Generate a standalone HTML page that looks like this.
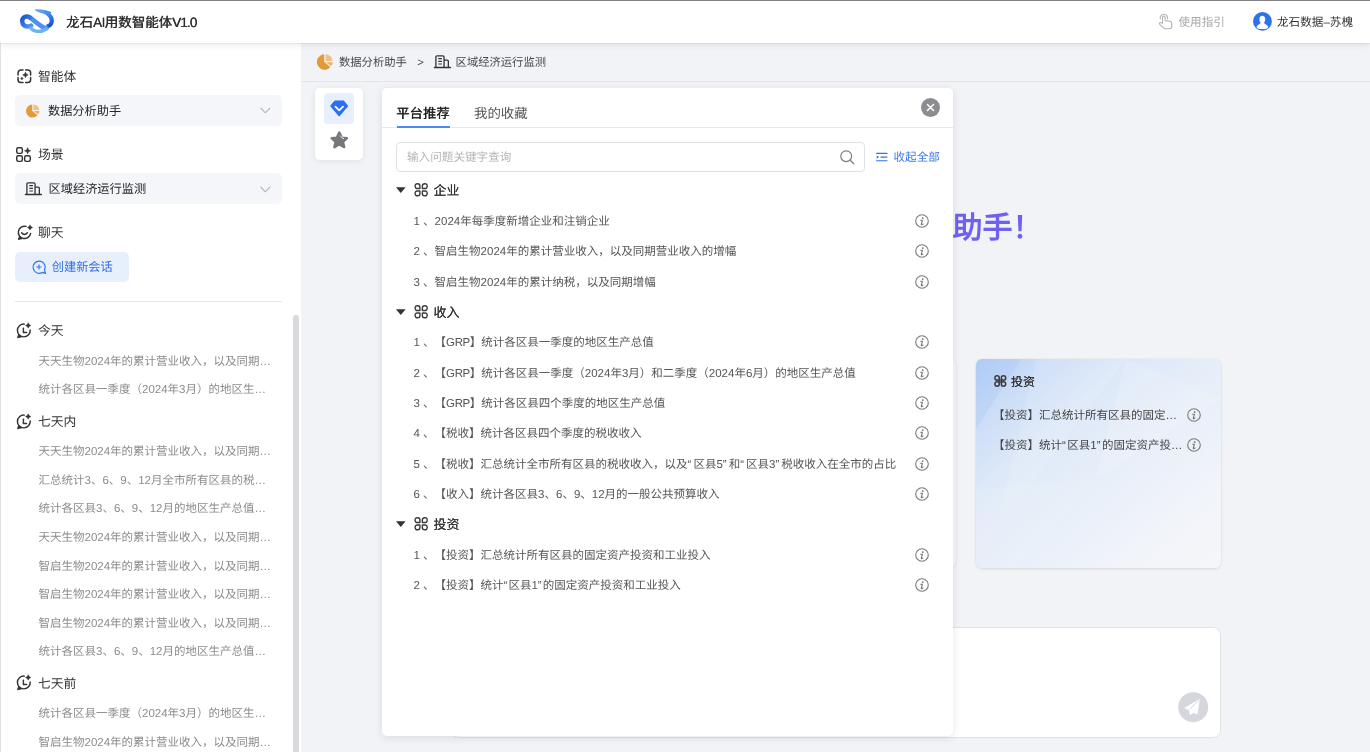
<!DOCTYPE html>
<html lang="zh-CN"><head><meta charset="utf-8">
<style>
html,body{margin:0;padding:0}
body{width:1370px;height:752px;overflow:hidden;position:relative;background:#f2f3f7;font-family:"Liberation Sans",sans-serif;color:#333;text-rendering:geometricPrecision;text-spacing-trim:space-all}
.a{position:absolute}
.t{position:absolute;white-space:nowrap;line-height:20px;height:20px;margin-top:1px}
svg{position:absolute;overflow:visible}
#root{position:absolute;left:0;top:0;width:1370px;height:752px;overflow:hidden;will-change:transform}
</style></head><body><div id="root">

<!-- ===== MAIN BG CONTENT (behind panel) ===== -->
<div class="a" id="crumb" style="left:301px;top:43px;width:1069px;height:38px;background:#f2f3f7;border-bottom:1px solid #e3e4e9"></div>


<!-- breadcrumb -->
<div class="a" style="left:301px;top:0;width:1069px;height:752px;z-index:1">
 <svg style="left:15.8px;top:54px" width="16" height="16" viewBox="0 0 16 16">
  <path d="M7.2,0.3 A7.7,7.7 0 1 0 13.4,13 L7.2,8.1 Z" fill="#e39a3b"/>
  <path d="M8.5,0.3 A7.5,7.5 0 0 1 15.7,7 L8.5,7 Z" fill="#efc283"/>
  <path d="M8.5,8.2 L15.7,8.2 A7.5,7.5 0 0 1 14.4,12.1 Z" fill="#ebb163"/>
 </svg>
 <div class="t" style="left:38px;top:51.5px;font-size:11.3px;color:#474747">数据分析助手</div>
 <div class="t" style="left:116.3px;top:51.5px;font-size:11.3px;color:#474747">&gt;</div>
 <svg style="left:133px;top:55px" width="17" height="14" viewBox="0 0 17 14">
  <path d="M0.4,12.5 H16.4" stroke="#333" stroke-width="1.3" stroke-linecap="round"/>
  <path d="M1.9,12.4 V2 Q1.9,0.8 3.1,0.8 H8.8 Q10.05,0.8 10.05,2 V12.4 M10.05,5.15 H13.2 Q14.35,5.15 14.35,6.3 V12.4" fill="none" stroke="#333" stroke-width="1.3"/>
  <path d="M4.3,3.7 H7.9 M4.3,6.35 H7.9 M4.3,9 H7.9" stroke="#333" stroke-width="1.2"/>
 </svg>
 <div class="t" style="left:154.6px;top:51.5px;font-size:11.3px;color:#474747">区域经济运行监测</div>
</div>

<!-- welcome (behind panel) -->
<div class="t" style="left:682.5px;top:207.5px;height:40px;line-height:40px;font-size:30px;font-weight:700;color:#6f60f2;z-index:1">您好，我是数据分析助手！</div>

<!-- cards -->
<div class="a" style="left:446px;top:359px;width:245px;height:208px;border-radius:6px;background:#f7f8fa;box-shadow:0 1px 3px rgba(0,0,0,.1);z-index:1"></div>
<div class="a" style="left:711px;top:359px;width:245px;height:208px;border-radius:6px;background:#f7f8fa;box-shadow:0 1px 3px rgba(0,0,0,.1);z-index:1"></div>
<div class="a" id="card3" style="left:975.5px;top:359px;width:245.5px;height:208.5px;border-radius:6px;overflow:hidden;background:linear-gradient(140deg,#b3cdf5 0%,#cadcf7 14%,#dde8f8 32%,#e8eff9 55%,#f1f4f9 78%,#f5f6f9 100%);box-shadow:0 0 0 0.5px rgba(0,0,0,.04),0 1px 3px rgba(0,0,0,.1);z-index:1">
 <svg style="left:0;top:0" width="245" height="208" viewBox="0 0 245 208">
  <path d="M0,0 L45,0 L0,70 Z" fill="#a9c8f5" opacity=".3"/>
  <path d="M60,0 L150,0 L20,170 Z" fill="#ffffff" opacity=".12"/>
  <path d="M150,0 L245,40 L120,120 Z" fill="#ffffff" opacity=".14"/>
  <path d="M0,130 L120,120 L40,208 L0,208 Z" fill="#ffffff" opacity=".1"/>
 </svg>
 <svg style="left:18px;top:16px" width="13" height="12" viewBox="0 0 13 12">
  <circle cx="3.1" cy="3" r="2.2" fill="none" stroke="#3c3c3c" stroke-width="1.5"/>
  <circle cx="9.5" cy="3" r="2.2" fill="none" stroke="#3c3c3c" stroke-width="1.5"/>
  <circle cx="3.1" cy="9" r="2.2" fill="none" stroke="#3c3c3c" stroke-width="1.5"/>
  <circle cx="9.5" cy="9" r="2.2" fill="none" stroke="#3c3c3c" stroke-width="1.5"/>
  <rect x="5.2" y="4.9" width="2.2" height="2.2" fill="none" stroke="#3c3c3c" stroke-width="1.4"/>
 </svg>
 <div class="t" style="left:35.5px;top:11.5px;font-size:12px;color:#333;text-shadow:0.1px 0 0 #333">投资</div>
 <div class="t" style="left:17.5px;top:45.5px;font-size:11.5px;color:#444">【投资】汇总统计所有区县的固定…</div>
 <div class="t" style="left:17.5px;top:76px;font-size:11.5px;color:#444">【投资】统计<span style="letter-spacing:1.5px">“</span>区县1<span style="letter-spacing:1.5px">”</span>的固定资产投…</div>
 <svg style="left:211.5px;top:48.7px" width="14" height="14" viewBox="0 0 14 14"><circle cx="7" cy="7" r="6.3" fill="none" stroke="#7a7a7a" stroke-width="1.1"/><circle cx="7.7" cy="4.1" r="0.9" fill="#707070"/><path d="M5.7,6.3 H7.4 L6.3,10.1 Q6.1,11 7,10.6 L8,10" fill="none" stroke="#707070" stroke-width="1.05" stroke-linecap="round" stroke-linejoin="round"/></svg>
 <svg style="left:211.5px;top:79px" width="14" height="14" viewBox="0 0 14 14"><circle cx="7" cy="7" r="6.3" fill="none" stroke="#7a7a7a" stroke-width="1.1"/><circle cx="7.7" cy="4.1" r="0.9" fill="#707070"/><path d="M5.7,6.3 H7.4 L6.3,10.1 Q6.1,11 7,10.6 L8,10" fill="none" stroke="#707070" stroke-width="1.05" stroke-linecap="round" stroke-linejoin="round"/></svg>
</div>

<!-- input box -->
<div class="a" style="left:451px;top:626.5px;width:768px;height:109px;border:1px solid #e1e2e6;border-radius:8px;background:#fff;z-index:1">
 <svg style="left:726px;top:64.5px" width="31" height="31" viewBox="0 0 31 31">
  <circle cx="15.2" cy="15.2" r="15" fill="#d5d7dc"/>
  <path d="M21.3,7.6 L6.6,16 L11.2,17.7 L12.2,22.7 L15.3,20.5 L19.3,22.1 Z" fill="#fff" stroke="#fff" stroke-width="0.6" stroke-linejoin="round"/>
  <path d="M20.6,8.4 L11.6,17.4" stroke="#d5d7dc" stroke-width="0.9"/>
 </svg>
</div>

<!-- left tab card -->
<div class="a" style="left:315px;top:88.3px;width:48px;height:72px;background:#fff;border-radius:5px;box-shadow:0 1px 6px rgba(0,0,0,.08);z-index:3">
 <div class="a" style="left:9px;top:5px;width:30px;height:31px;background:#e8effc;border-radius:4px"></div>
 <svg style="left:14.5px;top:11.5px" width="19" height="17" viewBox="0 0 19 17">
  <path d="M5,1.2 H13.4 L17.3,5.9 L9.2,15.4 L1.1,5.9 Z" fill="#2c6ff0" stroke="#2c6ff0" stroke-width="1.6" stroke-linejoin="round"/>
  <path d="M5.4,6.6 L9.2,10.3 L13,6.6" fill="none" stroke="#fff" stroke-width="1.7" stroke-linecap="round" stroke-linejoin="round"/>
 </svg>
 <svg style="left:14.5px;top:42.5px" width="19" height="18" viewBox="0 0 19 18">
  <path transform="translate(9.3 9.5) scale(1.1) translate(-9.5 -9.5)" d="M9.5,2.3 L11.6,6.9 L16.4,7.38 L12.8,10.7 L13.9,15.5 L9.5,12.9 L5.1,15.5 L6.2,10.7 L2.6,7.38 L7.4,6.9 Z" fill="#77787c" stroke="#77787c" stroke-width="2.3" stroke-linejoin="round"/>
  <path d="M10.4,5 Q11.3,7 13.6,7.7" fill="none" stroke="#fff" stroke-width="0.9" stroke-linecap="round"/>
 </svg>
</div>


<!-- ===== PANEL ===== -->
<div class="a" id="panel" style="left:382px;top:88px;width:571px;height:648px;background:#fff;border-radius:5px;box-shadow:0 2px 8px rgba(0,0,0,.10);z-index:3">
 <div class="t" style="left:14px;top:14.5px;font-size:13.4px;color:#222;text-shadow:0.45px 0 0 #222">平台推荐</div>
 <div class="t" style="left:92px;top:14.5px;font-size:13.4px;color:#555">我的收藏</div>
 <div class="a" style="left:0;top:39px;width:571px;height:1px;background:#e7e8ec"></div>
 <div class="a" style="left:14.5px;top:38px;width:53px;height:2px;background:#4a8af4"></div>
 <svg style="left:539px;top:10px" width="19" height="19" viewBox="0 0 19 19"><circle cx="9.5" cy="9.5" r="9.5" fill="#8c8d91"/><path d="M6.5,6.5 L12.5,12.5 M12.5,6.5 L6.5,12.5" stroke="#fff" stroke-width="1.55" stroke-linecap="round"/></svg>
 <div class="a" style="left:14px;top:54px;width:467px;height:28px;border:1px solid #dfe1e6;border-radius:4px"></div>
 <div class="t" style="left:25px;top:59px;font-size:11.6px;color:#b5b5b5">输入问题关键字查询</div>
 <svg style="left:457.8px;top:61.8px" width="15" height="15" viewBox="0 0 15 15"><circle cx="6.2" cy="6.2" r="5.4" fill="none" stroke="#7d7d7d" stroke-width="1.2"/><path d="M10.2,10.2 L13.8,13.8" stroke="#7d7d7d" stroke-width="1.3" stroke-linecap="round"/></svg>
 <svg style="left:494px;top:64px" width="12" height="11" viewBox="0 0 12 11"><path d="M0.6,1.4 H11 M4.9,5.1 H11 M0.6,8.7 H11" stroke="#2f72ea" stroke-width="1.15" stroke-linecap="round"/><path d="M0.7,3.5 L3.1,5.1 L0.7,6.7 Z" fill="#2f72ea"/></svg>
 <div class="t" style="left:511.5px;top:59px;font-size:11.6px;color:#3a78ec">收起全部</div>
 <svg style="left:14px;top:99.4px" width="10" height="7" viewBox="0 0 10 7"><path d="M0,0.2 H9.6 L4.8,6 Z" fill="#333"/></svg>
 <svg style="left:31.6px;top:95.2px" width="15" height="15" viewBox="0 0 15 15"><path d="M3.30,0.70 H3.75 A2.20,2.20 0 0 1 5.95,2.90 V5.15 A0.40,0.40 0 0 1 5.55,5.55 H3.30 A2.20,2.20 0 0 1 1.10,3.35 V2.90 A2.20,2.20 0 0 1 3.30,0.70 Z M10.55,0.70 H11.00 A2.20,2.20 0 0 1 13.20,2.90 V3.35 A2.20,2.20 0 0 1 11.00,5.55 H8.75 A0.40,0.40 0 0 1 8.35,5.15 V2.90 A2.20,2.20 0 0 1 10.55,0.70 Z M3.30,7.95 H5.55 A0.40,0.40 0 0 1 5.95,8.35 V10.60 A2.20,2.20 0 0 1 3.75,12.80 H3.30 A2.20,2.20 0 0 1 1.10,10.60 V10.15 A2.20,2.20 0 0 1 3.30,7.95 Z M8.75,7.95 H11.00 A2.20,2.20 0 0 1 13.20,10.15 V10.60 A2.20,2.20 0 0 1 11.00,12.80 H10.55 A2.20,2.20 0 0 1 8.35,10.60 V8.35 A0.40,0.40 0 0 1 8.75,7.95 Z" fill="none" stroke="#3a3a3a" stroke-width="1.4"/></svg>
 <div class="t" style="left:51.5px;top:92.4px;font-size:13px;color:#333;text-shadow:0.12px 0 0 #333">企业</div>
 <div class="t" style="left:31.5px;top:122.8px;font-size:11.5px;color:#555">1 、2024年每季度新增企业和注销企业</div>
 <svg style="left:532.8px;top:125.8px" width="14" height="14" viewBox="0 0 14 14"><circle cx="7" cy="7" r="6.3" fill="none" stroke="#7a7a7a" stroke-width="1.1"/><circle cx="7.7" cy="4.1" r="0.9" fill="#707070"/><path d="M5.7,6.3 H7.4 L6.3,10.1 Q6.1,11 7,10.6 L8,10" fill="none" stroke="#707070" stroke-width="1.05" stroke-linecap="round" stroke-linejoin="round"/></svg>
 <div class="t" style="left:31.5px;top:153.1px;font-size:11.5px;color:#555">2 、智启生物2024年的累计营业收入，以及同期营业收入的增幅</div>
 <svg style="left:532.8px;top:156.1px" width="14" height="14" viewBox="0 0 14 14"><circle cx="7" cy="7" r="6.3" fill="none" stroke="#7a7a7a" stroke-width="1.1"/><circle cx="7.7" cy="4.1" r="0.9" fill="#707070"/><path d="M5.7,6.3 H7.4 L6.3,10.1 Q6.1,11 7,10.6 L8,10" fill="none" stroke="#707070" stroke-width="1.05" stroke-linecap="round" stroke-linejoin="round"/></svg>
 <div class="t" style="left:31.5px;top:183.5px;font-size:11.5px;color:#555">3 、智启生物2024年的累计纳税，以及同期增幅</div>
 <svg style="left:532.8px;top:186.5px" width="14" height="14" viewBox="0 0 14 14"><circle cx="7" cy="7" r="6.3" fill="none" stroke="#7a7a7a" stroke-width="1.1"/><circle cx="7.7" cy="4.1" r="0.9" fill="#707070"/><path d="M5.7,6.3 H7.4 L6.3,10.1 Q6.1,11 7,10.6 L8,10" fill="none" stroke="#707070" stroke-width="1.05" stroke-linecap="round" stroke-linejoin="round"/></svg>
 <svg style="left:14px;top:220.8px" width="10" height="7" viewBox="0 0 10 7"><path d="M0,0.2 H9.6 L4.8,6 Z" fill="#333"/></svg>
 <svg style="left:31.6px;top:216.6px" width="15" height="15" viewBox="0 0 15 15"><path d="M3.30,0.70 H3.75 A2.20,2.20 0 0 1 5.95,2.90 V5.15 A0.40,0.40 0 0 1 5.55,5.55 H3.30 A2.20,2.20 0 0 1 1.10,3.35 V2.90 A2.20,2.20 0 0 1 3.30,0.70 Z M10.55,0.70 H11.00 A2.20,2.20 0 0 1 13.20,2.90 V3.35 A2.20,2.20 0 0 1 11.00,5.55 H8.75 A0.40,0.40 0 0 1 8.35,5.15 V2.90 A2.20,2.20 0 0 1 10.55,0.70 Z M3.30,7.95 H5.55 A0.40,0.40 0 0 1 5.95,8.35 V10.60 A2.20,2.20 0 0 1 3.75,12.80 H3.30 A2.20,2.20 0 0 1 1.10,10.60 V10.15 A2.20,2.20 0 0 1 3.30,7.95 Z M8.75,7.95 H11.00 A2.20,2.20 0 0 1 13.20,10.15 V10.60 A2.20,2.20 0 0 1 11.00,12.80 H10.55 A2.20,2.20 0 0 1 8.35,10.60 V8.35 A0.40,0.40 0 0 1 8.75,7.95 Z" fill="none" stroke="#3a3a3a" stroke-width="1.4"/></svg>
 <div class="t" style="left:51.5px;top:213.8px;font-size:13px;color:#333;text-shadow:0.12px 0 0 #333">收入</div>
 <div class="t" style="left:31.5px;top:244.1px;font-size:11.5px;color:#555">1 、【<span style="letter-spacing:-0.4px">GRP</span>】统计各区县一季度的地区生产总值</div>
 <svg style="left:532.8px;top:247.1px" width="14" height="14" viewBox="0 0 14 14"><circle cx="7" cy="7" r="6.3" fill="none" stroke="#7a7a7a" stroke-width="1.1"/><circle cx="7.7" cy="4.1" r="0.9" fill="#707070"/><path d="M5.7,6.3 H7.4 L6.3,10.1 Q6.1,11 7,10.6 L8,10" fill="none" stroke="#707070" stroke-width="1.05" stroke-linecap="round" stroke-linejoin="round"/></svg>
 <div class="t" style="left:31.5px;top:274.5px;font-size:11.5px;color:#555">2 、【<span style="letter-spacing:-0.4px">GRP</span>】统计各区县一季度（2024年3月）和二季度（2024年6月）的地区生产总值</div>
 <svg style="left:532.8px;top:277.5px" width="14" height="14" viewBox="0 0 14 14"><circle cx="7" cy="7" r="6.3" fill="none" stroke="#7a7a7a" stroke-width="1.1"/><circle cx="7.7" cy="4.1" r="0.9" fill="#707070"/><path d="M5.7,6.3 H7.4 L6.3,10.1 Q6.1,11 7,10.6 L8,10" fill="none" stroke="#707070" stroke-width="1.05" stroke-linecap="round" stroke-linejoin="round"/></svg>
 <div class="t" style="left:31.5px;top:304.9px;font-size:11.5px;color:#555">3 、【<span style="letter-spacing:-0.4px">GRP</span>】统计各区县四个季度的地区生产总值</div>
 <svg style="left:532.8px;top:307.9px" width="14" height="14" viewBox="0 0 14 14"><circle cx="7" cy="7" r="6.3" fill="none" stroke="#7a7a7a" stroke-width="1.1"/><circle cx="7.7" cy="4.1" r="0.9" fill="#707070"/><path d="M5.7,6.3 H7.4 L6.3,10.1 Q6.1,11 7,10.6 L8,10" fill="none" stroke="#707070" stroke-width="1.05" stroke-linecap="round" stroke-linejoin="round"/></svg>
 <div class="t" style="left:31.5px;top:335.2px;font-size:11.5px;color:#555">4 、【税收】统计各区县四个季度的税收收入</div>
 <svg style="left:532.8px;top:338.2px" width="14" height="14" viewBox="0 0 14 14"><circle cx="7" cy="7" r="6.3" fill="none" stroke="#7a7a7a" stroke-width="1.1"/><circle cx="7.7" cy="4.1" r="0.9" fill="#707070"/><path d="M5.7,6.3 H7.4 L6.3,10.1 Q6.1,11 7,10.6 L8,10" fill="none" stroke="#707070" stroke-width="1.05" stroke-linecap="round" stroke-linejoin="round"/></svg>
 <div class="t" style="left:31.5px;top:365.6px;font-size:11.5px;color:#555">5 、【税收】汇总统计全市所有区县的税收收入，以及<span style="letter-spacing:2px">“</span>区县5<span style="letter-spacing:2px">”</span>和<span style="letter-spacing:2px">“</span>区县3<span style="letter-spacing:2px">”</span>税收收入在全市的占比</div>
 <svg style="left:532.8px;top:368.6px" width="14" height="14" viewBox="0 0 14 14"><circle cx="7" cy="7" r="6.3" fill="none" stroke="#7a7a7a" stroke-width="1.1"/><circle cx="7.7" cy="4.1" r="0.9" fill="#707070"/><path d="M5.7,6.3 H7.4 L6.3,10.1 Q6.1,11 7,10.6 L8,10" fill="none" stroke="#707070" stroke-width="1.05" stroke-linecap="round" stroke-linejoin="round"/></svg>
 <div class="t" style="left:31.5px;top:395.9px;font-size:11.5px;color:#555">6 、【收入】统计各区县3、6、9、12月的一般公共预算收入</div>
 <svg style="left:532.8px;top:398.9px" width="14" height="14" viewBox="0 0 14 14"><circle cx="7" cy="7" r="6.3" fill="none" stroke="#7a7a7a" stroke-width="1.1"/><circle cx="7.7" cy="4.1" r="0.9" fill="#707070"/><path d="M5.7,6.3 H7.4 L6.3,10.1 Q6.1,11 7,10.6 L8,10" fill="none" stroke="#707070" stroke-width="1.05" stroke-linecap="round" stroke-linejoin="round"/></svg>
 <svg style="left:14px;top:433.2px" width="10" height="7" viewBox="0 0 10 7"><path d="M0,0.2 H9.6 L4.8,6 Z" fill="#333"/></svg>
 <svg style="left:31.6px;top:429.1px" width="15" height="15" viewBox="0 0 15 15"><path d="M3.30,0.70 H3.75 A2.20,2.20 0 0 1 5.95,2.90 V5.15 A0.40,0.40 0 0 1 5.55,5.55 H3.30 A2.20,2.20 0 0 1 1.10,3.35 V2.90 A2.20,2.20 0 0 1 3.30,0.70 Z M10.55,0.70 H11.00 A2.20,2.20 0 0 1 13.20,2.90 V3.35 A2.20,2.20 0 0 1 11.00,5.55 H8.75 A0.40,0.40 0 0 1 8.35,5.15 V2.90 A2.20,2.20 0 0 1 10.55,0.70 Z M3.30,7.95 H5.55 A0.40,0.40 0 0 1 5.95,8.35 V10.60 A2.20,2.20 0 0 1 3.75,12.80 H3.30 A2.20,2.20 0 0 1 1.10,10.60 V10.15 A2.20,2.20 0 0 1 3.30,7.95 Z M8.75,7.95 H11.00 A2.20,2.20 0 0 1 13.20,10.15 V10.60 A2.20,2.20 0 0 1 11.00,12.80 H10.55 A2.20,2.20 0 0 1 8.35,10.60 V8.35 A0.40,0.40 0 0 1 8.75,7.95 Z" fill="none" stroke="#3a3a3a" stroke-width="1.4"/></svg>
 <div class="t" style="left:51.5px;top:426.2px;font-size:13px;color:#333;text-shadow:0.12px 0 0 #333">投资</div>
 <div class="t" style="left:31.5px;top:456.6px;font-size:11.5px;color:#555">1 、【投资】汇总统计所有区县的固定资产投资和工业投入</div>
 <svg style="left:532.8px;top:459.6px" width="14" height="14" viewBox="0 0 14 14"><circle cx="7" cy="7" r="6.3" fill="none" stroke="#7a7a7a" stroke-width="1.1"/><circle cx="7.7" cy="4.1" r="0.9" fill="#707070"/><path d="M5.7,6.3 H7.4 L6.3,10.1 Q6.1,11 7,10.6 L8,10" fill="none" stroke="#707070" stroke-width="1.05" stroke-linecap="round" stroke-linejoin="round"/></svg>
 <div class="t" style="left:31.5px;top:487.0px;font-size:11.5px;color:#555">2 、【投资】统计<span style="letter-spacing:1px">“</span>区县1<span style="letter-spacing:1px">”</span>的固定资产投资和工业投入</div>
 <svg style="left:532.8px;top:490.0px" width="14" height="14" viewBox="0 0 14 14"><circle cx="7" cy="7" r="6.3" fill="none" stroke="#7a7a7a" stroke-width="1.1"/><circle cx="7.7" cy="4.1" r="0.9" fill="#707070"/><path d="M5.7,6.3 H7.4 L6.3,10.1 Q6.1,11 7,10.6 L8,10" fill="none" stroke="#707070" stroke-width="1.05" stroke-linecap="round" stroke-linejoin="round"/></svg>
</div>

<!-- ===== SIDEBAR ===== -->
<div class="a" id="side" style="left:0;top:43px;width:301px;height:709px;background:#fff"></div>
<div class="a" style="left:0;top:43px;width:1px;height:709px;background:#e1e1e1"></div>


<!-- sidebar content -->
<div class="a" id="sidec" style="left:0;top:0;width:301px;height:752px;z-index:2">
 <svg style="left:16.5px;top:69px" width="15" height="15" viewBox="0 0 15 15">
  <path d="M1.05,6 V3.85 a2.8,2.8 0 0 1 2.8,-2.8 H6 M8.6,1.05 H10.8 a2.8,2.8 0 0 1 2.8,2.8 V6 M13.6,8.6 V10.8 a2.8,2.8 0 0 1 -2.8,2.8 H8.6 M6,13.6 H3.85 a2.8,2.8 0 0 1 -2.8,-2.8 V8.6" fill="none" stroke="#333" stroke-width="1.5" stroke-linecap="round"/>
  <path d="M8.44,3.20 L9.29,5.05 L11.14,5.90 L9.29,6.75 L8.44,8.60 L7.59,6.75 L5.74,5.90 L7.59,5.05 Z" fill="#333" stroke="#333" stroke-width="0.6" stroke-linejoin="round"/>
  <path d="M4.90,8.15 L5.40,9.00 L6.25,9.50 L5.40,10.00 L4.90,10.85 L4.40,10.00 L3.55,9.50 L4.40,9.00 Z" fill="#333" stroke="#333" stroke-width="0.5" stroke-linejoin="round"/>
 </svg>
 <div class="t" style="left:38px;top:66px;font-size:12.8px;color:#333">智能体</div>
 <div class="a" style="left:15px;top:95px;width:267px;height:30.5px;background:#f5f6fa;border-radius:5px"></div>
 <svg style="left:26.3px;top:104px" width="14" height="14" viewBox="0 0 14 14">
  <path d="M6.3,0.6 A6.5,6.5 0 1 0 11.6,11.2 L6.3,7 Z" fill="#e39a3b"/>
  <path d="M7.4,0.6 A6.4,6.4 0 0 1 13.4,6 L7.4,6 Z" fill="#efc283"/>
  <path d="M7.4,7 L13.4,7 A6.4,6.4 0 0 1 12.3,10.3 Z" fill="#ebb163"/>
 </svg>
 <div class="t" style="left:48px;top:100px;font-size:12.2px;color:#262626">数据分析助手</div>
 <svg style="left:260.2px;top:107.3px" width="11" height="7" viewBox="0 0 11 7"><path d="M0.5,0.8 L5.3,5.8 L10.2,0.8" fill="none" stroke="#b0b0b0" stroke-width="1.1"/></svg>

 <svg style="left:16.2px;top:146.7px" width="16" height="16" viewBox="0 0 16 16">
  <rect x="0.75" y="0.75" width="5.6" height="5.6" rx="1.5" fill="none" stroke="#333" stroke-width="1.45"/>
  <rect x="0.75" y="8.75" width="5.6" height="5.6" rx="1.5" fill="none" stroke="#333" stroke-width="1.45"/>
  <rect x="8.65" y="8.75" width="5.6" height="5.6" rx="1.5" fill="none" stroke="#333" stroke-width="1.45"/>
  <path d="M11.6,0.6 L12.5,2.9 L14.8,3.8 L12.5,4.7 L11.6,7 L10.7,4.7 L8.4,3.8 L10.7,2.9 Z" fill="#333" stroke="#333" stroke-width="0.5" stroke-linejoin="round"/>
 </svg>
 <div class="t" style="left:38px;top:144px;font-size:12.8px;color:#333">场景</div>
 <div class="a" style="left:15px;top:173px;width:267px;height:30.5px;background:#f5f6fa;border-radius:5px"></div>
 <svg style="left:25px;top:182px" width="17" height="14" viewBox="0 0 17 14">
  <path d="M0.4,12.5 H16.4" stroke="#333" stroke-width="1.3" stroke-linecap="round"/>
  <path d="M1.9,12.4 V2 Q1.9,0.8 3.1,0.8 H8.8 Q10.05,0.8 10.05,2 V12.4 M10.05,5.15 H13.2 Q14.35,5.15 14.35,6.3 V12.4" fill="none" stroke="#333" stroke-width="1.3"/>
  <path d="M4.3,3.7 H7.9 M4.3,6.35 H7.9 M4.3,9 H7.9" stroke="#333" stroke-width="1.2"/>
 </svg>
 <div class="t" style="left:48.6px;top:178px;font-size:12.2px;color:#262626">区域经济运行监测</div>
 <svg style="left:260.2px;top:185.6px" width="11" height="7" viewBox="0 0 11 7"><path d="M0.5,0.8 L5.3,5.8 L10.2,0.8" fill="none" stroke="#b0b0b0" stroke-width="1.1"/></svg>

 <svg style="left:16.5px;top:224.6px" width="16" height="16" viewBox="0 0 16 16">
  <path d="M9,1.35 A6.2,6.2 0 1 0 13.65,8.4" fill="none" stroke="#333" stroke-width="1.45" stroke-linecap="round"/>
  <path d="M2.4,11.4 L1.2,14.6 L4.9,13.8 Z" fill="#333" stroke="#333" stroke-width="0.8" stroke-linejoin="round"/>
  <path d="M4.6,7.7 Q7.5,11.2 10.4,7.7" fill="none" stroke="#333" stroke-width="1.45" stroke-linecap="round"/>
  <path d="M13,-0.1 L13.9,1.6 L15.6,2.5 L13.9,3.4 L13,5.1 L12.1,3.4 L10.4,2.5 L12.1,1.6 Z" fill="#333" stroke="#333" stroke-width="0.5" stroke-linejoin="round"/>
 </svg>
 <div class="t" style="left:38px;top:222px;font-size:12.8px;color:#333">聊天</div>
 <div class="a" style="left:15px;top:251.5px;width:114px;height:30.5px;background:#e8effc;border-radius:5px"></div>
 <svg style="left:32px;top:259.5px" width="15" height="15" viewBox="0 0 15 15">
  <path d="M10.3,12.4 A6.1,6.1 0 1 1 12.5,10.1 L13.6,13.4 Z" fill="none" stroke="#2f72ea" stroke-width="1.2" stroke-linejoin="round"/>
  <path d="M7,4.4 V9.6 M4.4,7 H9.6" stroke="#2f72ea" stroke-width="1.1"/>
 </svg>
 <div class="t" style="left:51.8px;top:256px;font-size:12.2px;color:#2f6fe8">创建新会话</div>

 <div class="a" style="left:15px;top:301px;width:267px;height:1px;background:#e5e6eb"></div>
 <div class="a" style="left:293px;top:315px;width:6px;height:440px;background:#d9dadd;border-radius:3px"></div>
<svg style="left:15.9px;top:322.8px" width="16" height="16" viewBox="0 0 16 16">
  <path d="M8.3,1.1 A6.4,6.4 0 1 0 14.2,7" fill="none" stroke="#333" stroke-width="1.45" stroke-linecap="round"/>
  <path d="M2.6,11.2 L1.4,14.8 L5.4,14.1 Z" fill="#333" stroke="#333" stroke-width="0.8" stroke-linejoin="round"/>
  <path d="M7.4,5.1 V9.4 H10.6" fill="none" stroke="#333" stroke-width="1.45" stroke-linecap="round" stroke-linejoin="round"/>
  <path d="M12.2,-0.2 L13.1,1.6 L14.9,2.5 L13.1,3.4 L12.2,5.2 L11.3,3.4 L9.5,2.5 L11.3,1.6 Z" fill="#333" stroke="#333" stroke-width="0.5" stroke-linejoin="round"/>
 </svg>
 <div class="t" style="left:38px;top:320.4px;font-size:12.8px;color:#333">今天</div>
 <div class="t" style="left:38.5px;top:350.9px;width:236px;overflow:hidden;text-overflow:ellipsis;font-size:11.5px;color:#8c8c8c">天天生物2024年的累计营业收入，以及同期营业收入的增幅</div>
 <div class="t" style="left:38.5px;top:379.4px;width:236px;overflow:hidden;text-overflow:ellipsis;font-size:11.5px;color:#8c8c8c">统计各区县一季度（2024年3月）的地区生产总值</div>
<svg style="left:15.9px;top:413.6px" width="16" height="16" viewBox="0 0 16 16">
  <path d="M8.3,1.1 A6.4,6.4 0 1 0 14.2,7" fill="none" stroke="#333" stroke-width="1.45" stroke-linecap="round"/>
  <path d="M2.6,11.2 L1.4,14.8 L5.4,14.1 Z" fill="#333" stroke="#333" stroke-width="0.8" stroke-linejoin="round"/>
  <path d="M7.4,5.1 V9.4 H10.6" fill="none" stroke="#333" stroke-width="1.45" stroke-linecap="round" stroke-linejoin="round"/>
  <path d="M12.2,-0.2 L13.1,1.6 L14.9,2.5 L13.1,3.4 L12.2,5.2 L11.3,3.4 L9.5,2.5 L11.3,1.6 Z" fill="#333" stroke="#333" stroke-width="0.5" stroke-linejoin="round"/>
 </svg>
 <div class="t" style="left:38px;top:411.2px;font-size:12.8px;color:#333">七天内</div>
 <div class="t" style="left:38.5px;top:441.0px;width:236px;overflow:hidden;text-overflow:ellipsis;font-size:11.5px;color:#8c8c8c">天天生物2024年的累计营业收入，以及同期营业收入的增幅</div>
 <div class="t" style="left:38.5px;top:469.8px;width:236px;overflow:hidden;text-overflow:ellipsis;font-size:11.5px;color:#8c8c8c">汇总统计3、6、9、12月全市所有区县的税收收入</div>
 <div class="t" style="left:38.5px;top:498.4px;width:236px;overflow:hidden;text-overflow:ellipsis;font-size:11.5px;color:#8c8c8c">统计各区县3、6、9、12月的地区生产总值和增幅</div>
 <div class="t" style="left:38.5px;top:527.0px;width:236px;overflow:hidden;text-overflow:ellipsis;font-size:11.5px;color:#8c8c8c">天天生物2024年的累计营业收入，以及同期营业收入的增幅</div>
 <div class="t" style="left:38.5px;top:555.5px;width:236px;overflow:hidden;text-overflow:ellipsis;font-size:11.5px;color:#8c8c8c">智启生物2024年的累计营业收入，以及同期营业收入的增幅</div>
 <div class="t" style="left:38.5px;top:584.0px;width:236px;overflow:hidden;text-overflow:ellipsis;font-size:11.5px;color:#8c8c8c">智启生物2024年的累计营业收入，以及同期营业收入的增幅</div>
 <div class="t" style="left:38.5px;top:612.5px;width:236px;overflow:hidden;text-overflow:ellipsis;font-size:11.5px;color:#8c8c8c">智启生物2024年的累计营业收入，以及同期营业收入的增幅</div>
 <div class="t" style="left:38.5px;top:641.0px;width:236px;overflow:hidden;text-overflow:ellipsis;font-size:11.5px;color:#8c8c8c">统计各区县3、6、9、12月的地区生产总值和增幅</div>
<svg style="left:15.9px;top:675.0px" width="16" height="16" viewBox="0 0 16 16">
  <path d="M8.3,1.1 A6.4,6.4 0 1 0 14.2,7" fill="none" stroke="#333" stroke-width="1.45" stroke-linecap="round"/>
  <path d="M2.6,11.2 L1.4,14.8 L5.4,14.1 Z" fill="#333" stroke="#333" stroke-width="0.8" stroke-linejoin="round"/>
  <path d="M7.4,5.1 V9.4 H10.6" fill="none" stroke="#333" stroke-width="1.45" stroke-linecap="round" stroke-linejoin="round"/>
  <path d="M12.2,-0.2 L13.1,1.6 L14.9,2.5 L13.1,3.4 L12.2,5.2 L11.3,3.4 L9.5,2.5 L11.3,1.6 Z" fill="#333" stroke="#333" stroke-width="0.5" stroke-linejoin="round"/>
 </svg>
 <div class="t" style="left:38px;top:672.6px;font-size:12.8px;color:#333">七天前</div>
 <div class="t" style="left:38.5px;top:703.0px;width:236px;overflow:hidden;text-overflow:ellipsis;font-size:11.5px;color:#8c8c8c">统计各区县一季度（2024年3月）的地区生产总值</div>
 <div class="t" style="left:38.5px;top:731.6px;width:236px;overflow:hidden;text-overflow:ellipsis;font-size:11.5px;color:#8c8c8c">智启生物2024年的累计营业收入，以及同期营业收入的增幅</div>
</div>

<!-- ===== HEADER ===== -->
<div class="a" style="left:0;top:0;width:1370px;height:1px;background:#828388;z-index:5"></div>
<div class="a" id="hdr" style="left:0;top:1px;width:1370px;height:42px;background:#fff;box-shadow:0 1px 1px rgba(0,0,0,.05),0 2px 7px rgba(0,0,0,.07);z-index:4"></div>


<div class="a" style="left:0;top:1px;width:1370px;height:42px;z-index:6">
 <svg style="left:0;top:-1px" width="60" height="40" viewBox="0 0 60 40">
  <defs>
   <linearGradient id="lg1" x1="0" y1="0" x2="0.6" y2="1"><stop offset="0" stop-color="#6fb0f7"/><stop offset="0.55" stop-color="#3f86ee"/><stop offset="1" stop-color="#1753cc"/></linearGradient>
   <linearGradient id="lg2" x1="0" y1="0" x2="1" y2="1"><stop offset="0" stop-color="#1a55cf"/><stop offset="1" stop-color="#4f97f2"/></linearGradient>
  </defs>
  <path d="M34.5,9.6 C38,8.6 46,9.2 51.5,12.2 L50.6,13.6 C53.8,16.5 54.8,21 53,24.5 C51.8,27 49,28.6 46,28.2 L46.5,24.4 C48.6,24.4 50,22.6 49.6,20 C49,16.6 45.5,13.6 40.5,12.8 C38,12.3 36,11.5 34.5,9.6 Z" fill="url(#lg1)"/>
  <path d="M46.5,28.2 C40.5,27.6 35,20.5 29.8,17.4" fill="none" stroke="#4a91f3" stroke-width="4.6" stroke-linecap="round"/>
  <path d="M30.2,17.6 C25,14.6 21,18.6 22.6,23.2 C23.8,26.6 28.6,27.4 31.2,25.6" fill="none" stroke="url(#lg2)" stroke-width="4.4" stroke-linecap="round"/>
  <path d="M30.8,28.2 C34,32.2 41.2,32.4 46.2,29" fill="none" stroke="#6cb0f8" stroke-width="3.4" stroke-linecap="round"/>
 </svg>
 <div class="t" style="left:66px;top:10.5px;font-size:13.5px;color:#2f2f2f;text-shadow:0.35px 0 0 #2f2f2f">龙石<span style="letter-spacing:-0.6px">AI</span>用数智能体<span style="letter-spacing:-0.9px">V1.0</span></div>
 <svg style="left:1152px;top:7px" width="26" height="26" viewBox="0 0 26 26">
  <path d="M8.3,10.8 A3.7,3.7 0 1 1 15.5,10.8" fill="none" stroke="#b4b4b4" stroke-width="1.1" stroke-linecap="round"/>
  <path d="M10.5,15.3 V9.5 a1.35,1.35 0 0 1 2.7,0 V12.6 L17.6,13.3 a2.2,2.2 0 0 1 2.1,2.2 V18.6 a2.2,2.2 0 0 1 -2.2,2.2 H13.4 a2,2 0 0 1 -1.5,-0.7 L7.6,16.3 a1.1,1.1 0 0 1 1.4,-1.6 Z" fill="#fff" stroke="#b4b4b4" stroke-width="1.1" stroke-linejoin="round"/>
 </svg>
 <div class="t" style="left:1178.5px;top:10.5px;font-size:11.6px;color:#a8a8a8">使用指引</div>
 <svg style="left:1252.8px;top:10.9px" width="19" height="19" viewBox="0 0 19 19">
  <circle cx="9.45" cy="9.45" r="9.4" fill="#2c72ee"/>
  <ellipse cx="9.3" cy="7.4" rx="2.9" ry="3.6" fill="#fff"/>
  <path d="M7.7,10.9 H10.9 L14.3,13.4 Q15.8,14.6 14.8,15.9 Q13.6,17.1 9.4,17.1 Q5.2,17.1 4,15.9 Q3,14.6 4.5,13.4 Z" fill="#fff"/>
 </svg>
 <div class="t" style="left:1277px;top:10.5px;font-size:11.6px;color:#333">龙石数据–苏槐</div>
</div>

</div></body></html>
